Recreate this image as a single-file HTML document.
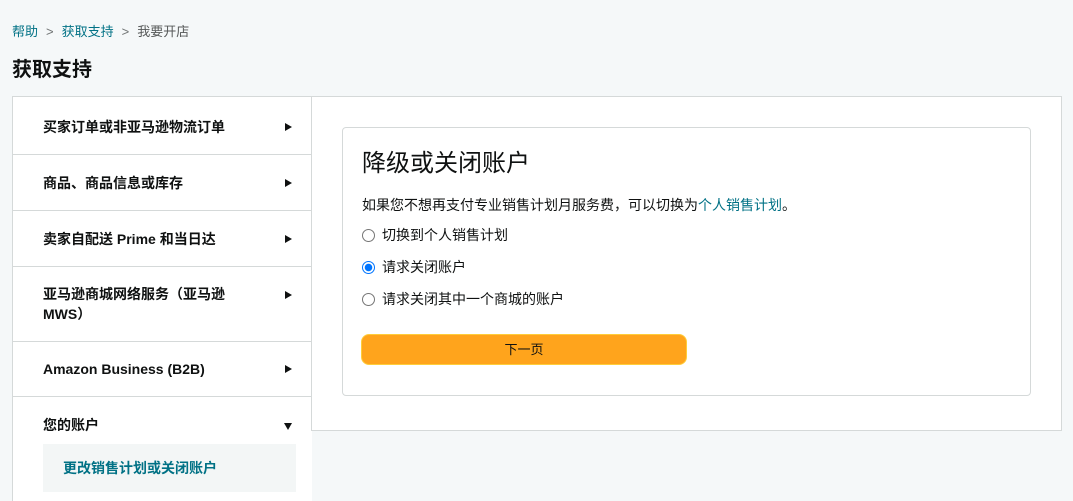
<!DOCTYPE html>
<html><head><meta charset="utf-8"><style>
*{box-sizing:border-box;margin:0;padding:0}
html,body{width:1073px;height:501px;overflow:hidden}
body{background:#f5f8f9;font-family:"Liberation Sans","Noto Sans CJK SC",sans-serif;color:#0f1111;position:relative}
.a{position:absolute}
.bc{left:12px;top:21px;font-size:13px;color:#565959}
.bc span.l{color:#007185}
.bc .s{color:#6f7373;margin:0 8px}
h1{position:absolute;left:12px;top:53px;font-size:20px;font-weight:bold;color:#0f1111}
.side{left:12px;top:96px;width:300px;height:420px;background:#fff;border:1px solid #d5d9d9;border-right:none}
.it{position:absolute;left:0;width:299px;border-bottom:1px solid #d5d9d9;font-size:14px;font-weight:bold;padding-left:30px;line-height:20px}
.tri{position:absolute;right:20px;width:0;height:0;border-top:4px solid transparent;border-bottom:4px solid transparent;border-left:7px solid #0f1111}
.main{left:311px;top:96px;width:751px;height:335px;background:#fff;border:1px solid #d5d9d9}
.card{left:342px;top:127px;width:689px;height:269px;border:1px solid #d5d9d9;border-radius:4px;background:#fff}
.r{position:absolute;left:362px;font-size:14px;display:flex;align-items:center}
.rd{width:13px;height:13px;border:1px solid #767676;border-radius:50%;margin-right:7px;background:#fff}
.rd.on{border:1px solid #0075ff;background:radial-gradient(circle,#0075ff 3.5px,#fff 4px)}
</style></head><body>
<div class="a bc"><span class="l">帮助</span><span class="s">&gt;</span><span class="l">获取支持</span><span class="s">&gt;</span>我要开店</div>
<h1>获取支持</h1>
<div class="a side">
<div class="it" style="top:0;height:58px;padding-top:20px">买家订单或非亚马逊物流订单<div class="tri" style="top:26px"></div></div>
<div class="it" style="top:58px;height:56px;padding-top:18px">商品、商品信息或库存<div class="tri" style="top:24px"></div></div>
<div class="it" style="top:114px;height:56px;padding-top:18px">卖家自配送 Prime 和当日达<div class="tri" style="top:24px"></div></div>
<div class="it" style="top:170px;height:75px;padding-top:17px">亚马逊商城网络服务（亚马逊<br>MWS）<div class="tri" style="top:24px"></div></div>
<div class="it" style="top:245px;height:55px;padding-top:17px">Amazon Business (B2B)<div class="tri" style="top:23px"></div></div>
<div class="it" style="top:300px;height:120px;border:none;padding-top:18px">您的账户<div style="position:absolute;right:20px;top:26px;border-left:4px solid transparent;border-right:4px solid transparent;border-top:7px solid #0f1111"></div>
<div style="position:absolute;left:30px;top:47px;width:253px;height:48px;background:#f3f6f6;color:#007185;padding:14px 0 0 20px;font-size:14px">更改销售计划或关闭账户</div></div>
</div>
<div class="a main"></div>
<div class="a card"></div>
<div class="a" style="left:362px;top:143px;font-size:24px">降级或关闭账户</div>
<div class="a" style="left:362px;top:195px;font-size:14px">如果您不想再支付专业销售计划月服务费，可以切换为<span style="color:#007185">个人销售计划</span>。</div>
<div class="r" style="top:225px"><div class="rd"></div>切换到个人销售计划</div>
<div class="r" style="top:257px"><div class="rd on"></div>请求关闭账户</div>
<div class="r" style="top:289px"><div class="rd"></div>请求关闭其中一个商城的账户</div>
<div class="a" style="left:361px;top:334px;width:326px;height:31px;background:#ffa41c;border:1px solid #ffcd3a;border-radius:8px;font-size:13px;text-align:center;line-height:29px">下一页</div>
</body></html>
